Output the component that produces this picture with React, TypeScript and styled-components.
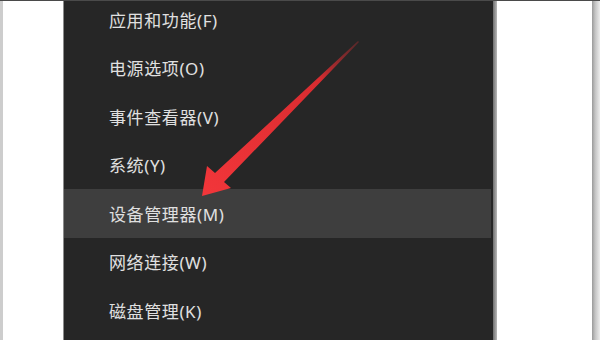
import styled, { createGlobalStyle } from 'styled-components';

const menuItems = [
  { label: '应用和功能(F)' },
  { label: '电源选项(O)' },
  { label: '事件查看器(V)' },
  { label: '系统(Y)' },
  { label: '设备管理器(M)', active: true },
  { label: '网络连接(W)' },
  { label: '磁盘管理(K)' },
];

const App = () => {
  return (
    <>
      <GlobalStyle />
      <Frame>
        <LeftPane />
        <Menu>
          <MenuList>
            {menuItems.map(item => (
              <MenuItem key={item.label} $active={item.active}>
                {item.label}
              </MenuItem>
            ))}
          </MenuList>
        </Menu>
        <Divider />
        <RightPane />
        <RightEdge />
        <Arrow viewBox="0 0 600 340" width="600" height="340">
          <defs>
            <linearGradient id="arrowFill" x1="358" y1="40" x2="202" y2="193" gradientUnits="userSpaceOnUse">
              <stop offset="0" stopColor="#7a2a2c" stopOpacity="0.6" />
              <stop offset="0.25" stopColor="#d92c30" />
              <stop offset="1" stopColor="#f2363a" />
            </linearGradient>
          </defs>
          <polygon
            points="358,40 359,41 224,181 231,187 202,195 207,165 215,172"
            fill="url(#arrowFill)"
          />
        </Arrow>
      </Frame>
    </>
  );
};

export default App;

const GlobalStyle = createGlobalStyle`
  html, body {
    margin: 0;
    padding: 0;
    background: #ffffff;
  }
`;

const Frame = styled.div`
  position: relative;
  display: flex;
  width: 600px;
  height: 340px;
  overflow: hidden;
  box-sizing: border-box;
  border-top: 1px solid #4a4a4a;
  font-family: 'Noto Sans', 'Noto Sans CJK SC', sans-serif;
`;

const LeftPane = styled.div`
  width: 60px;
  flex-shrink: 0;
  background: #ffffff;
  border-left: 3px solid #cdcdcd;
  border-right: 1px solid #8c8c8c;
`;

const Menu = styled.div`
  width: 429px;
  flex-shrink: 0;
  background: #262626;
`;

const MenuList = styled.div`
  display: flex;
  flex-direction: column;
  margin: -6px 2px 0 0;
`;

const MenuItem = styled.div<{ $active?: boolean }>`
  height: 48.5px;
  display: flex;
  align-items: center;
  padding-left: 45px;
  font-size: 17px;
  letter-spacing: 0.6px;
  color: #e0e0e0;
  background: ${props => (props.$active ? '#3e3e3e' : 'transparent')};
  white-space: nowrap;
`;

const Divider = styled.div`
  width: 4px;
  flex-shrink: 0;
  background: linear-gradient(to right, #6e6e6e, #b8b8b8);
`;

const RightPane = styled.div`
  width: 95px;
  flex-shrink: 0;
  background: #ffffff;
`;

const RightEdge = styled.div`
  flex: 1;
  background: linear-gradient(to right, #9a9a9a, #c4c4c4 40%, #ececec);
`;

const Arrow = styled.svg`
  position: absolute;
  left: 0;
  top: 0;
  pointer-events: none;
`;
